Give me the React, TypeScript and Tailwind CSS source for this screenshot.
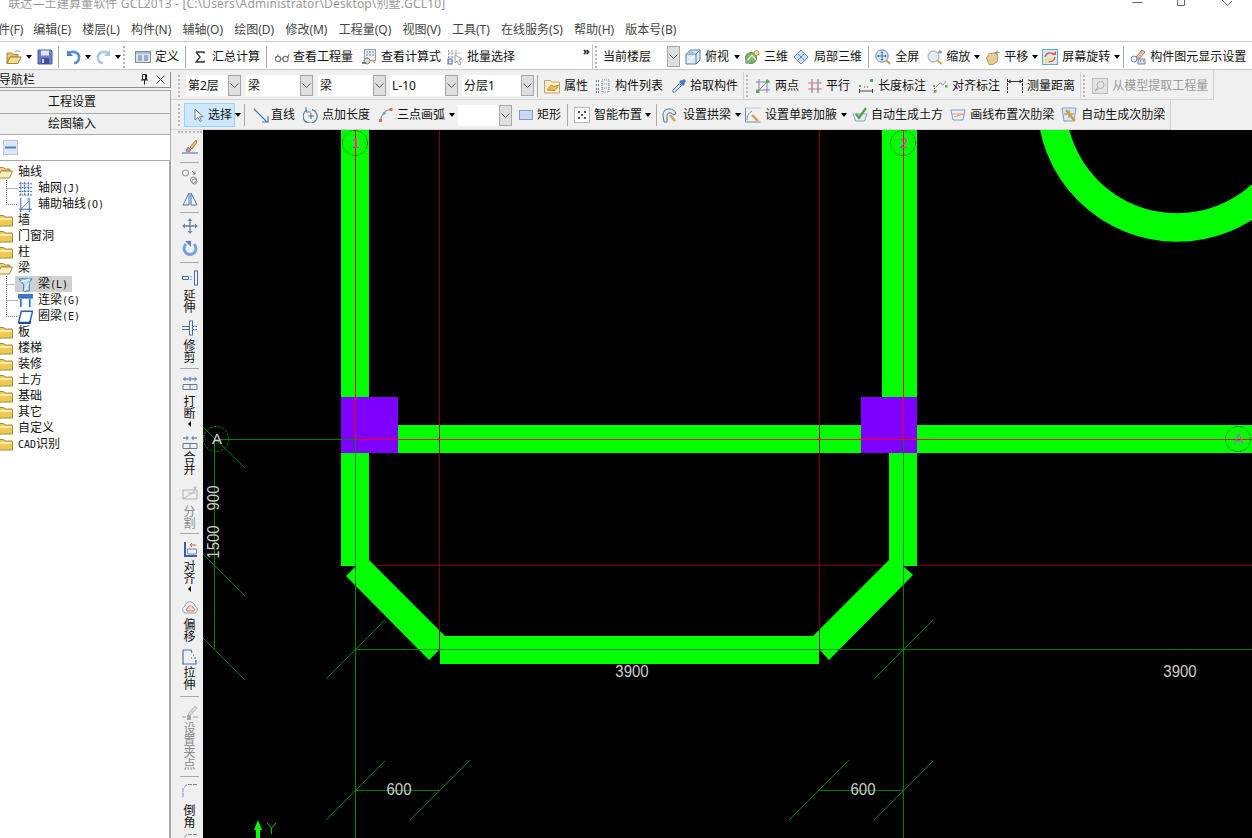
import type { ReactNode } from "react";
import clsx from "clsx";

const Ico = ({ children, className }: { children: ReactNode; className?: string }) => (
  <svg viewBox="0 0 16 16" className={clsx("h-4 w-4 shrink-0", className)} fill="none">
    {children}
  </svg>
);

/* main toolbar icons */
const FolderOpenIcon = () => (
  <Ico>
    <path d="M1 4h5l1 1.5h5V8H4L1 14z" fill="#e8c468" stroke="#a5853c" />
    <path d="M4 8h11l-3 6.5H1z" fill="#f7dd8c" stroke="#a5853c" />
    <path d="M9 3c2-2 4-1 5 0" stroke="#6f8fb8" />
  </Ico>
);
const SaveIcon = () => (
  <Ico>
    <path d="M1 1h13l1 1v13H1z" fill="#6d7fc4" stroke="#4d5f9c" />
    <rect x="4" y="1.5" width="8" height="5" fill="#dfe6f5" />
    <rect x="4" y="9" width="8" height="6" fill="#3f4f96" />
    <rect x="5" y="10" width="2" height="4" fill="#c7d0ea" />
  </Ico>
);
const UndoIcon = ({ light }: { light?: boolean }) => (
  <Ico className={light ? "-scale-x-100" : undefined}>
    <path d="M3 3.5c6-2 11 1 10 6-.6 3-3 4.5-5 4.5" stroke={light ? "#a9c8e8" : "#5a8fd0"} strokeWidth="2.6" />
    <path d="M1 1v6h6z" fill={light ? "#a9c8e8" : "#4a80c4"} />
  </Ico>
);
const DefineIcon = () => (
  <Ico>
    <rect x="0.5" y="2.5" width="15" height="11" fill="#dce6f2" stroke="#7a8ca8" />
    <rect x="1" y="3" width="14" height="2" fill="#a9bcd6" />
    <path d="M3 7h4M3 9h4M3 11h4M9 7h4M9 9h4M9 11h4" stroke="#5d7391" />
  </Ico>
);
const SigmaIcon = () => (
  <Ico>
    <path d="M4 3h8v1.5M4 3l4 5-4 5h8v-1.5" stroke="#333" strokeWidth="1.4" />
  </Ico>
);
const GlassesIcon = () => (
  <Ico>
    <circle cx="4" cy="10" r="2.6" stroke="#777" strokeWidth="1.2" />
    <circle cx="11.5" cy="10" r="2.6" stroke="#777" strokeWidth="1.2" />
    <path d="M6.5 10h2.5M1.5 9l3-4M14 9l1-4" stroke="#777" />
  </Ico>
);
const CalcDocIcon = () => (
  <Ico>
    <rect x="3.5" y="0.5" width="11" height="11" fill="#eef2f8" stroke="#8b9bb5" />
    <path d="M5 3h2M8 3h2M11 3h2M5 6h2M8 6h2M11 6h2M5 9h2" stroke="#5a7ca8" />
    <circle cx="6" cy="12" r="3" fill="#e8d9a8" stroke="#7a8aa0" />
    <path d="M1 14h4" stroke="#3c6cc0" strokeWidth="1.6" />
    <path d="M11 11l3 3" stroke="#d8a040" strokeWidth="1.6" />
  </Ico>
);
const BatchIcon = () => (
  <Ico>
    <path d="M1.5 1v14M1.5 4h13M1.5 8h8M1.5 12h6M5 1v8M9 1v7" stroke="#9a9fa8" strokeDasharray="2 1" />
    <rect x="1" y="10" width="4" height="5" stroke="#4a6cc0" />
    <path d="M8 6l7 4-3 1 2 4-2 1-2-4-2 2z" fill="#fff" stroke="#9aa0a8" />
  </Ico>
);
const CubeIcon = () => (
  <Ico>
    <path d="M1 5l4-4h10v10l-4 4H1z" fill="#dbe8f5" stroke="#5c7fa0" />
    <path d="M1 5h10v10M11 5l4-4" stroke="#5c7fa0" />
    <path d="M5 1l6 4h-10z" fill="#9cc0e0" />
    <path d="M2 14l8-8" stroke="#fff" />
  </Ico>
);
const ThreeDIcon = () => (
  <Ico>
    <circle cx="7" cy="9" r="5.5" fill="#7fb85a" stroke="#5a8a40" />
    <path d="M3 12l5-6 4 5" stroke="#d8e8f0" strokeWidth="1.4" />
    <circle cx="12.5" cy="4" r="2.5" fill="#f0e0a0" stroke="#b0983c" />
    <circle cx="3" cy="13" r="2" fill="#8aa0c0" />
  </Ico>
);
const Local3DIcon = () => (
  <Ico>
    <path d="M1 8l7-7 7 7-7 7z" fill="#cfe0f2" stroke="#6a8cb0" />
    <path d="M4.5 4.5l7 7M8 1L4.5 4.5M11.5 4.5l-7 7M8 8l3.5-3.5" stroke="#6a8cb0" />
  </Ico>
);
const FullScreenIcon = () => (
  <Ico>
    <circle cx="7" cy="7" r="6.2" fill="#dbe6f5" stroke="#6888b0" />
    <path d="M7 3v8M3 7h8" stroke="#4a6ca8" />
    <path d="M7 2l1.5 2h-3zM7 12l1.5-2h-3zM2 7l2-1.5v3zM12 7l-2-1.5v3z" fill="#4a6ca8" />
    <path d="M11.5 11.5l3.5 3.5" stroke="#c89a40" strokeWidth="1.8" />
  </Ico>
);
const ZoomIcon = () => (
  <Ico>
    <circle cx="6.5" cy="7.5" r="5.5" fill="#e3ebf5" stroke="#8a9cb4" />
    <path d="M3 6c1-2 2-2.5 4-2.5" stroke="#fff" strokeWidth="1.5" />
    <path d="M10.5 11.5l4 3.5" stroke="#c8a040" strokeWidth="1.8" />
    <path d="M13 1v4M11 3h4" stroke="#6a7c94" />
  </Ico>
);
const PanIcon = () => (
  <Ico>
    <path d="M2 10c-1-2 0-3 1.5-2.500L3 5.500 5 4l1 1 2-1.500 1.500 1 2-.5L13 8l-1 5-4 2.500H4z" fill="#e4cd8f" stroke="#b8a060" />
    <path d="M12 1v5M9.5 3.5h5" stroke="#7a8ca0" />
  </Ico>
);
const RotateIcon = () => (
  <Ico>
    <rect x="0.5" y="0.5" width="15" height="15" fill="#d8ecf5" stroke="#60a8d0" />
    <rect x="3" y="9" width="7" height="5" fill="#e8e098" />
    <path d="M3 8a5 5 0 0 1 9-2" stroke="#e05a40" strokeWidth="1.4" />
    <path d="M13 8a5 5 0 0 1-6 4.500" stroke="#e05a40" strokeWidth="1.4" />
    <path d="M10 6h4V2z" fill="#e05a40" />
  </Ico>
);
const DisplayIcon = () => (
  <Ico>
    <circle cx="4" cy="10" r="3" fill="#e6edf5" stroke="#7a8a9e" />
    <path d="M6 8l6-7 3 2-6 7z" fill="#e4c8a0" stroke="#9c7c60" />
    <path d="M8 10h7v5H8z" fill="#cfdcec" stroke="#6a8cb0" />
    <path d="M10 12h1M13 12h1" stroke="#c05030" />
  </Ico>
);
const AttrIcon = () => (
  <Ico>
    <path d="M.5 2.5h6l1 1.500h8v11H.5z" fill="#fbeed0" stroke="#c4a070" />
    <path d="M3 12l4-5 3 1.500L15 7l-4 5.500z" fill="#e8c050" stroke="#c09030" />
  </Ico>
);
const ListIcon = () => (
  <Ico>
    <path d="M1 3h3M1 7h3M1 11h3M1 14h3" stroke="#6a7c94" strokeDasharray="1 1" strokeWidth="2" />
    <path d="M7 2h7v12H7zM7 6h7M7 10h7" stroke="#6a86a8" strokeDasharray="1 1" />
  </Ico>
);
const PickIcon = () => (
  <Ico>
    <path d="M2 14l-.5-1.500 7-7 2 2-7 7z" fill="#cfe2f5" stroke="#4a78b8" />
    <path d="M8 4l2-2 1 .5 2-1.500 2 2-1.500 2 .5 1-2 2z" fill="#4a78b8" />
  </Ico>
);
const TwoPointIcon = () => (
  <Ico>
    <path d="M4 1v14M12 1v14M1 4h14M1 12h14" stroke="#7a86b0" />
    <path d="M2 14L14 2" stroke="#d87070" />
    <rect x="1" y="12" width="3" height="3" fill="#50b050" />
    <rect x="11" y="2" width="3" height="3" fill="#50b050" />
  </Ico>
);
const ParallelIcon = () => (
  <Ico>
    <path d="M5 1v14M11 1v14" stroke="#7a86b0" strokeWidth="1.2" />
    <path d="M1 5h14M1 11h14" stroke="#d87070" strokeWidth="1.2" />
  </Ico>
);
const LenDimIcon = () => (
  <Ico>
    <rect x="12" y="1" width="3" height="3" fill="#50b050" />
    <rect x="1" y="7" width="2" height="2" fill="#50b050" />
    <path d="M1.5 11v4M14.5 11v4M2 13h12" stroke="#444" />
    <path d="M6 9h1M9 9h1" stroke="#444" />
  </Ico>
);
const AlignDimIcon = () => (
  <Ico>
    <path d="M2 11l6-6 3 2 3-4" stroke="#555" strokeDasharray="1.5 1" />
    <rect x="13" y="7" width="2.5" height="2.5" fill="#50b050" />
    <rect x="2" y="12" width="2.5" height="2.5" fill="#50b050" />
    <rect x="1" y="7" width="2" height="2" fill="#50b050" />
  </Ico>
);
const MeasureIcon = () => (
  <Ico>
    <path d="M.5 1v14M15.5 1v14" stroke="#333" strokeDasharray="3 1" />
    <path d="M1 3.5h14" stroke="#333" />
    <path d="M1 3.5l2.500-2v4zM15 3.5l-2.500-2v4z" fill="#333" />
  </Ico>
);
const SearchOffIcon = () => (
  <Ico>
    <rect x="0.5" y="0.5" width="15" height="15" fill="#e4e4e4" stroke="#bcbcbc" />
    <circle cx="8.5" cy="7" r="3.5" stroke="#b0b0b0" />
    <path d="M6 10l-3 3" stroke="#a8a8a8" strokeWidth="1.5" />
  </Ico>
);
const CursorIcon = () => (
  <Ico>
    <path d="M4 2v11l3-2.500 2 4 1.500-.7-2-4h3.800z" fill="#fff" stroke="#6e7c90" />
  </Ico>
);
const LineIcon = () => (
  <Ico>
    <path d="M1 2l13 13" stroke="#4a78b0" strokeWidth="1.2" />
    <path d="M15 9v6H9" stroke="#4a78b0" strokeWidth="1.2" />
  </Ico>
);
const PointLenIcon = () => (
  <Ico>
    <path d="M4 3a7 7 0 1 0 5-.5" stroke="#5a80a8" strokeWidth="1.3" />
    <path d="M3 0v5h5" stroke="#5a80a8" />
    <path d="M8 6v6M5 9h6" stroke="#4a70a0" />
  </Ico>
);
const ArcIcon = () => (
  <Ico>
    <path d="M2.5 14C3 8 7 3 13 2" stroke="#7a8aa0" strokeWidth="1.1" />
    <rect x="1" y="12" width="3" height="3" fill="#e87050" />
    <rect x="11.5" y="1" width="3" height="3" fill="#e87050" />
    <rect x="5" y="5" width="2.5" height="2.5" fill="#50a8d0" />
  </Ico>
);
const RectIcon = () => (
  <Ico>
    <rect x="1.5" y="3.5" width="13" height="9" fill="#c9d8f5" stroke="#7a9ad8" />
  </Ico>
);
const SmartIcon = () => (
  <Ico>
    <rect x="0.5" y="0.5" width="15" height="15" fill="#fff" stroke="#777" strokeDasharray="1 1" />
    <path d="M4 4h2v2H4zM10 4h2v2h-2zM4 10h2v2H4zM10 10h2v2h-2zM7 7h2v2H7z" fill="#455a78" />
  </Ico>
);
const ArchIcon = () => (
  <Ico>
    <path d="M1 8c0-8 12-8 13-1l-3 1c-1-3-5-3-6 0v7H2z" fill="#e6f0f8" stroke="#4a78a8" />
    <path d="M8 8l5 6" stroke="#d8a040" strokeWidth="2.4" />
  </Ico>
);
const HaunchIcon = () => (
  <Ico>
    <path d="M.5 1v14h15" stroke="#6a8cb0" />
    <path d="M1 1h15" stroke="#b8c8dc" />
    <path d="M2 13c0-5 2-7 5-9" stroke="#6a8cb0" />
    <path d="M7 8l6 6" stroke="#d8a040" strokeWidth="2.4" />
  </Ico>
);
const EarthIcon = () => (
  <Ico>
    <path d="M1 7l2.500 7h9L15 7z" fill="#e8eef5" stroke="#8aa0b8" />
    <path d="M4 7l3 4 7-10" stroke="#48a848" strokeWidth="2.2" />
  </Ico>
);
const RibLineIcon = () => (
  <Ico>
    <path d="M1 3h14M3 13h10M1 3l2 10M15 3l-2 10" stroke="#7a9ccc" />
    <path d="M2 7h12M4 10l9-3" stroke="#d89a80" />
  </Ico>
);
const RibAutoIcon = () => (
  <Ico>
    <path d="M1 1h14l-2 13H3z" fill="#d8e8f5" stroke="#7a9ccc" />
    <path d="M5 3l9 11" stroke="#c89840" strokeWidth="2.2" />
    <path d="M3 7h10M8 3v8" stroke="#c8a048" strokeWidth="1.4" />
  </Ico>
);

/* tree icons */
const FolderClosed = () => (
  <Ico>
    <path d="M.5 3.5h6l1.500 1.500h7.500v9H.5z" fill="#f0c850" stroke="#a88a3c" />
    <path d="M1 6h14v2H1z" fill="#fbeeb0" />
  </Ico>
);
const FolderOpened = () => (
  <Ico>
    <path d="M.5 3.5h6l1.500 1.500h5v2H4l-3.500 6z" fill="#eccf80" stroke="#a88a3c" />
    <path d="M4 7h11.500l-3 7H.5z" fill="#fbeec0" stroke="#a88a3c" />
  </Ico>
);
const AxisGridIcon = () => (
  <Ico>
    <path d="M1 3h14M1 7h14M1 11h14M1 15h14M3 1v15M7 1v15M11 1v15" stroke="#2a5cc0" strokeDasharray="2 1" />
  </Ico>
);
const AuxAxisIcon = () => (
  <Ico>
    <path d="M3 1v15M12 1v15M1 13h14" stroke="#2a5cc0" />
    <path d="M3 13L13 3" stroke="#7a8ea8" />
    <rect x="10" y="1" width="3" height="3" fill="#9ab0d0" />
  </Ico>
);
const BeamIcon = () => (
  <Ico>
    <path d="M1 2h14l-3 4v9H6V8z" fill="#bfe0f5" stroke="#2a70c0" />
    <path d="M3 5l10-3M7 15l5-9" stroke="#fff" />
  </Ico>
);
const ConnBeamIcon = () => (
  <Ico>
    <rect x="0.5" y="1.5" width="15" height="4" fill="#3a78c8" stroke="#2a5ca8" strokeDasharray="2 .5" />
    <path d="M3 6v9M12.500 6v9" stroke="#3a78c8" strokeWidth="2" />
  </Ico>
);
const RingBeamIcon = () => (
  <Ico>
    <path d="M3.5 2.5h12l-3 12H.5z" fill="#fff" stroke="#2a5cb0" strokeWidth="1.6" />
    <path d="M.5 15h12l1-2" stroke="#1c48a0" strokeWidth="2" />
  </Ico>
);

/* vertical toolbar icons */
const BrushIcon = () => (
  <Ico>
    <path d="M14 1L8 8l2 2 5-7z" fill="#e8c070" stroke="#a08050" />
    <path d="M6 8l3 3c-1 2-3 2-5 1z" fill="#e08cb0" stroke="#808090" />
    <path d="M0 14h16" stroke="#5a7ca8" strokeWidth="1.2" />
  </Ico>
);
const CopyCircleIcon = () => (
  <Ico>
    <circle cx="3.5" cy="4" r="3" stroke="#8a8f98" />
    <circle cx="11.5" cy="11" r="3" stroke="#8a8f98" />
    <circle cx="12.5" cy="12.5" r="2.5" stroke="#8a8f98" />
    <path d="M10 2l3 3M13 2.5V5h-2.500" stroke="#6a86a8" />
  </Ico>
);
const MirrorIcon = () => (
  <Ico>
    <path d="M7 2L1 14h6zM9 2l6 12H9z" fill="#f2f5f9" stroke="#4a70a8" />
  </Ico>
);
const MoveIcon = () => (
  <Ico>
    <path d="M8 1v14M1 8h14" stroke="#6a8098" strokeWidth="1.3" />
    <path d="M8 0l2.500 3h-5zM8 16l2.500-3h-5zM0 8l3-2.500v5zM16 8l-3-2.500v5z" fill="#6a8ab0" />
  </Ico>
);
const SpinIcon = () => (
  <Ico>
    <path d="M4 4a6 6 0 1 0 8 0" stroke="#7aa0d8" strokeWidth="3" />
    <path d="M3 1h6v6z" fill="#5a88d0" />
  </Ico>
);
const ExtendIcon = () => (
  <Ico>
    <path d="M.5 6.5h6v3h-6z" stroke="#4a70a8" />
    <path d="M8.5 6.500h2M8.5 9.500h2" stroke="#4a70a8" strokeDasharray="1 1" />
    <rect x="12.5" y="1" width="3" height="14" stroke="#4a70a8" />
  </Ico>
);
const TrimIcon = () => (
  <Ico>
    <path d="M0 6.500h7M0 9.500h7" stroke="#4a70a8" />
    <rect x="7.5" y="1" width="3" height="14" stroke="#4a70a8" fill="#f5f8fc" />
    <path d="M11 6.500h5M11 9.500h5" stroke="#4a70a8" strokeDasharray="1.5 1" />
  </Ico>
);
const BreakIcon = () => (
  <Ico>
    <path d="M1 4h5M15 4h-5" stroke="#6a8cc8" strokeWidth="1.3" />
    <path d="M1 4l2.500-2.500v5zM10 4L8 1.500v5zM15 4l-2.500-2.500v5zM6 4l2-2.500v5z" fill="#6a8cc8" />
    <path d="M1 9.500h14v5H1zM8 9.500v5" stroke="#707880" />
  </Ico>
);
const MergeIcon = () => (
  <Ico>
    <path d="M1 4h5M15 4h-5" stroke="#6a8cc8" strokeWidth="1.3" />
    <path d="M7 4L4.500 1.500v5zM9 4l2.500-2.500v5z" fill="#6a8cc8" />
    <path d="M1 9.500h14v5H1zM8 9.500v5" stroke="#707880" />
  </Ico>
);
const SplitIcon = () => (
  <Ico>
    <path d="M1 5h14v9H1z" fill="#f0f0f0" stroke="#b0b0b0" />
    <path d="M1 14L13 6M6 8h8" stroke="#b8b8b8" />
    <path d="M12 1l3 1-3 4z" fill="#c0c0c0" />
  </Ico>
);
const AlignIcon = () => (
  <Ico>
    <path d="M3 1v14h12" stroke="#3c5cb0" strokeWidth="2" />
    <path d="M5.5 8h9v5h-9z" stroke="#6a8cc8" />
    <path d="M14 4H8M10 2L8 4l2 2" stroke="#d86040" />
  </Ico>
);
const OffsetIcon = () => (
  <Ico>
    <path d="M3 14c-3-1-3-6 0-7 0-5 9-6 10 0 3 1 3 6 0 7z" fill="#f5f6f8" stroke="#8a9cb4" />
    <path d="M5 12c-1-1-1-3 1-3 0-3 5-3 5 0 2 0 2 2 1 3z" fill="#f8e0d8" stroke="#d87060" />
  </Ico>
);
const StretchIcon = () => (
  <Ico>
    <path d="M1 1h8l1 3M1 1v14h13v-4" stroke="#4a70a8" strokeWidth="1.2" />
    <path d="M11 6h1M12 9h2M9 9h1M13 12h1" stroke="#555" />
  </Ico>
);
const GripIcon = () => (
  <Ico>
    <path d="M6 9l7-8 2 2-7 8z" fill="#d8d8d8" stroke="#bbb" />
    <path d="M0 12h4M11 12h5" stroke="#bbb" strokeWidth="1.5" />
    <rect x="5" y="10" width="4" height="5" fill="#a8a8a8" />
  </Ico>
);
const ChamferIcon = () => (
  <Ico>
    <path d="M15 1.500H5L1 5.500V15" stroke="#6a8cb0" strokeDasharray="4 1" />
  </Ico>
);

const Caret = ({ className }: { className?: string }) => (
  <span className={clsx("h-0 w-0 shrink-0 border-x-[3px] border-t-[4px] border-x-transparent border-t-black", className)} />
);

const Sep = ({ className }: { className?: string }) => (
  <span className={clsx("h-[22px] w-px shrink-0 bg-[#a8a8a8]", className)} />
);

const Grip = ({ className }: { className?: string }) => (
  <span className={clsx("h-[22px] w-[2px] shrink-0 border-l-2 border-dotted border-[#b4b4b4]", className)} />
);

const Tool = ({
  icon,
  label,
  className,
  gap = "gap-[4px]",
  dim,
}: {
  icon: ReactNode;
  label: string;
  className?: string;
  gap?: string;
  dim?: boolean;
}) => (
  <div className={clsx("flex shrink-0 items-center", gap, dim ? "text-[#9a9a9a]" : "text-[#111]", className)}>
    {icon}
    <span>{label}</span>
  </div>
);

const Combo = ({ text, className }: { text: string; className?: string }) => (
  <div className={clsx("flex h-[21px] shrink-0 items-center justify-between bg-white", className)}>
    <span className="pl-[2px] text-[#111]">{text}</span>
    <span className="flex h-[21px] w-[13px] items-center justify-center border border-[#a6a6a6] bg-[#dedede]">
      <svg viewBox="0 0 9 5" className="h-[5px] w-[9px]" fill="none">
        <path d="M.5.5l4 4 4-4" stroke="#555" />
      </svg>
    </span>
  </div>
);

const ToolbarTop = () => (
  <div className="flex h-[29px] items-center border-y border-[#c8c8c8] bg-white pt-[2px] text-[12px] leading-[16px]">
    <div className="ml-[6px]"><FolderOpenIcon /></div>
    <Caret className="ml-[4px]" />
    <div className="ml-[5px]"><SaveIcon /></div>
    <Sep className="ml-[5px]" />
    <div className="ml-[7px]"><UndoIcon /></div>
    <Caret className="ml-[3px]" />
    <div className="ml-[4px]"><UndoIcon light /></div>
    <Caret className="ml-[4px]" />
    <Grip className="ml-[2px]" />
    <Tool className="ml-[10px]" icon={<DefineIcon />} label="定义" />
    <Sep className="ml-[6px]" />
    <Tool className="ml-[6px]" icon={<SigmaIcon />} label="汇总计算" />
    <Sep className="ml-[6px]" />
    <Tool className="ml-[7px]" gap="gap-[3px]" icon={<GlassesIcon />} label="查看工程量" />
    <Tool className="ml-[8px]" icon={<CalcDocIcon />} label="查看计算式" />
    <Tool className="ml-[6px]" icon={<BatchIcon />} label="批量选择" />
    <span className="ml-[68px] w-[8px] self-start text-[11px] font-bold leading-[14px] text-black">»</span>
    <span className="ml-px h-full w-px shrink-0 bg-[#c8c8c8]" />
    <Grip className="ml-[2px]" />
    <Combo className="ml-[4px] w-[79px]" text="当前楼层" />
    <Tool className="ml-[5px]" icon={<CubeIcon />} label="俯视" />
    <Caret className="ml-[5px]" />
    <Tool className="ml-[4px]" icon={<ThreeDIcon />} label="三维" />
    <Tool className="ml-[5px]" gap="gap-[5px]" icon={<Local3DIcon />} label="局部三维" />
    <Sep className="ml-[6px]" />
    <Tool className="ml-[6px]" icon={<FullScreenIcon />} label="全屏" />
    <Tool className="ml-[8px]" gap="gap-[3px]" icon={<ZoomIcon />} label="缩放" />
    <Caret className="ml-[4px]" />
    <Tool className="ml-[5px]" gap="gap-[3px]" icon={<PanIcon />} label="平移" />
    <Caret className="ml-[4px]" />
    <Tool className="ml-[4px]" icon={<RotateIcon />} label="屏幕旋转" />
    <Caret className="ml-[4px]" />
    <Sep className="ml-[3px]" />
    <Tool className="ml-[6px]" icon={<DisplayIcon />} label="构件图元显示设置" />
  </div>
);

const ToolbarSecond = () => (
  <div className="flex h-[30px] items-center text-[12px] leading-[16px]">
    <div className="flex h-full items-center border-r border-b border-[#d2d2d2] bg-[#f0f0f0] pr-[5px] pt-[2px]">
      <Grip className="ml-[7px]" />
      <Combo className="ml-[6px] w-[55px]" text="第2层" />
      <Combo className="ml-[5px] w-[67px]" text="梁" />
      <Combo className="ml-[5px] w-[68px]" text="梁" />
      <Combo className="ml-[4px] w-[68px]" text="L-10" />
      <Combo className="ml-[4px] w-[72px]" text="分层1" />
      <Sep className="ml-[3px]" />
      <Tool className="ml-[6px]" icon={<AttrIcon />} label="属性" />
      <Tool className="ml-[7px]" icon={<ListIcon />} label="构件列表" />
      <Tool className="ml-[8px]" gap="gap-[3px]" icon={<PickIcon />} label="拾取构件" />
      <span className="ml-[5px] h-full w-px bg-[#d2d2d2]" />
      <Grip className="ml-[2px]" />
      <Tool className="ml-[7px]" icon={<TwoPointIcon />} label="两点" />
      <Tool className="ml-[8px]" gap="gap-[3px]" icon={<ParallelIcon />} label="平行" />
      <Tool className="ml-[8px]" icon={<LenDimIcon />} label="长度标注" />
      <Tool className="ml-[6px]" icon={<AlignDimIcon />} label="对齐标注" />
      <Tool className="ml-[7px]" icon={<MeasureIcon />} label="测量距离" />
      <span className="ml-[5px] h-full w-px bg-[#d2d2d2]" />
      <Grip className="ml-[2px]" />
      <Tool className="ml-[7px]" icon={<SearchOffIcon />} label="从模型提取工程量" dim />
    </div>
  </div>
);

const ToolbarThird = () => (
  <div className="flex h-[30px] items-center text-[12px] leading-[16px]">
    <div className="flex h-full items-center border-r border-b border-[#d2d2d2] bg-[#f0f0f0] pr-[5px] pt-[1px]">
      <Grip className="ml-[7px]" />
      <div className="ml-[4px] flex h-[24px] w-[51px] items-center gap-[1px] border border-[#99d1ff] bg-[#cce8ff] pl-[6px] text-[#111]">
        <CursorIcon />
        <span>选择</span>
      </div>
      <Caret />
      <Sep className="ml-[3px]" />
      <Tool className="ml-[8px]" gap="gap-[2px]" icon={<LineIcon />} label="直线" />
      <Tool className="ml-[8px]" gap="gap-[3px]" icon={<PointLenIcon />} label="点加长度" />
      <Tool className="ml-[8px]" gap="gap-[3px]" icon={<ArcIcon />} label="三点画弧" />
      <Caret className="ml-[4px]" />
      <Combo className="ml-[3px] w-[54px]" text="" />
      <Tool className="ml-[6px]" gap="gap-[3px]" icon={<RectIcon />} label="矩形" />
      <Sep className="ml-[6px]" />
      <Tool className="ml-[6px]" icon={<SmartIcon />} label="智能布置" />
      <Caret className="ml-[3px]" />
      <Sep className="ml-[5px]" />
      <Tool className="ml-[5px]" gap="gap-[5px]" icon={<ArchIcon />} label="设置拱梁" />
      <Caret className="ml-[4px]" />
      <Tool className="ml-[4px]" icon={<HaunchIcon />} label="设置单跨加腋" />
      <Caret className="ml-[4px]" />
      <Tool className="ml-[5px]" gap="gap-[3px]" icon={<EarthIcon />} label="自动生成土方" />
      <Tool className="ml-[7px]" icon={<RibLineIcon />} label="画线布置次肋梁" />
      <Tool className="ml-[7px]" icon={<RibAutoIcon />} label="自动生成次肋梁" />
    </div>
  </div>
);

const Mono = ({ children }: { children: ReactNode }) => (
  <span className="font-['DejaVu_Sans_Mono',monospace] text-[10px]">{children}</span>
);

const TreeFolder = ({ open, children }: { open?: boolean; children: ReactNode }) => (
  <div className="flex h-[16px] items-center">
    <div className="ml-[-3px] w-[21px]">{open ? <FolderOpened /> : <FolderClosed />}</div>
    <span>{children}</span>
  </div>
);

const TreeLeaf = ({
  icon,
  children,
  last,
  active,
}: {
  icon: ReactNode;
  children: ReactNode;
  last?: boolean;
  active?: boolean;
}) => (
  <div className="flex h-[16px] items-center">
    <svg viewBox="0 0 12 16" className="ml-[6px] h-4 w-3 shrink-0" fill="none">
      <path d={last ? "M.5 0V8.500H12" : "M.5 0V16M.5 8.500H12"} stroke="#777" strokeDasharray="1 1" />
    </svg>
    <div className={clsx("ml-[-3px] flex h-[16px] w-[57px] items-center pl-[3px]", active && "bg-[#d0d0d0]")}>
      <div className="w-[20px] shrink-0 [&>svg]:h-[15px] [&>svg]:w-[15px]">{icon}</div>
      <span className="whitespace-nowrap">{children}</span>
    </div>
  </div>
);

const NavPanel = () => (
  <div className="flex h-[768px] w-[171px] shrink-0 flex-col overflow-hidden bg-[#f0f0f0] text-[12px] leading-[16px] text-[#111]">
    <div className="mt-[2px] flex h-[16px] items-center border-r border-b border-[#8c8c8c] pr-[3px]">
      <span className="ml-[-1px] text-[12px]">导航栏</span>
      <svg viewBox="0 0 9 11" className="ml-auto h-[11px] w-[9px]" fill="none">
        <path d="M2.5.5h4v5h-4zM1 6h7M4.5 6v4.500" stroke="#222" />
        <path d="M5.500 1v4.500" stroke="#222" />
      </svg>
      <svg viewBox="0 0 9 9" className="ml-[7px] mr-[2px] h-[9px] w-[9px]" fill="none">
        <path d="M.5.5l8 8M8.500.5l-8 8" stroke="#333" />
      </svg>
    </div>
    <div className="mt-[2px] flex h-[23px] items-center justify-center border-t border-r border-[#aaa] pr-[26px]">工程设置</div>
    <div className="flex h-[21px] items-center justify-center border-t border-r border-[#aaa] pr-[26px]">绘图输入</div>
    <div className="flex h-[27px] items-center border-t border-r border-b border-[#aaa] bg-white pl-[3px]">
      <svg viewBox="0 0 15 15" className="h-[15px] w-[15px]" fill="none">
        <rect x="0.5" y="0.5" width="14" height="14" fill="#dfe6f8" stroke="#b8c4e4" />
        <path d="M2 7.500h11" stroke="#3a88c0" strokeWidth="2" />
      </svg>
    </div>
    <div className="flex-1 border-r-2 border-[#a8a8a8] bg-white pt-[3px]">
      <TreeFolder open>轴线</TreeFolder>
      <TreeLeaf icon={<AxisGridIcon />}>轴网<Mono>(J)</Mono></TreeLeaf>
      <TreeLeaf icon={<AuxAxisIcon />} last>辅助轴线<Mono>(O)</Mono></TreeLeaf>
      <TreeFolder>墙</TreeFolder>
      <TreeFolder>门窗洞</TreeFolder>
      <TreeFolder>柱</TreeFolder>
      <TreeFolder open>梁</TreeFolder>
      <TreeLeaf icon={<BeamIcon />} active>梁<Mono>(L)</Mono></TreeLeaf>
      <TreeLeaf icon={<ConnBeamIcon />}>连梁<Mono>(G)</Mono></TreeLeaf>
      <TreeLeaf icon={<RingBeamIcon />} last>圈梁<Mono>(E)</Mono></TreeLeaf>
      <TreeFolder>板</TreeFolder>
      <TreeFolder>楼梯</TreeFolder>
      <TreeFolder>装修</TreeFolder>
      <TreeFolder>土方</TreeFolder>
      <TreeFolder>基础</TreeFolder>
      <TreeFolder>其它</TreeFolder>
      <TreeFolder>自定义</TreeFolder>
      <TreeFolder><Mono>CAD</Mono>识别</TreeFolder>
    </div>
  </div>
);

const VSep = ({ className }: { className?: string }) => (
  <span className={clsx("h-px w-[19px] shrink-0 bg-[#a8a8a8]", className)} />
);

const VTool = ({
  icon,
  text,
  className,
  textTop,
  arrow,
  dim,
}: {
  icon: ReactNode;
  text?: string;
  className?: string;
  textTop?: string;
  arrow?: boolean;
  dim?: boolean;
}) => (
  <div className={clsx("flex shrink-0 flex-col items-center", className)}>
    {icon}
    {text && (
      <span className={clsx("ml-[-2px] text-[12px] leading-[13px] [writing-mode:vertical-rl]", dim ? "text-[#8a8a8a]" : "text-[#111]", textTop)}>
        {text}
      </span>
    )}
    {arrow && <span className="mt-[2px] h-0 w-0 border-y-[3px] border-r-[3px] border-y-transparent border-r-black" />}
  </div>
);

const VerticalBar = () => (
  <div className="flex h-[708px] w-[27px] shrink-0 flex-col items-center overflow-hidden bg-[#f0f0f0]">
    <span className="mt-[1px] h-[2px] w-[24px] shrink-0 border-t-2 border-dotted border-[#b4b4b4]" />
    <VTool className="mt-[6px]" icon={<BrushIcon />} />
    <VSep className="mt-[7px]" />
    <VTool className="mt-[6px]" icon={<CopyCircleIcon />} />
    <VTool className="mt-[6px]" icon={<MirrorIcon />} />
    <VSep className="mt-[5px]" />
    <VTool className="mt-[5px]" icon={<MoveIcon />} />
    <VTool className="mt-[6px]" icon={<SpinIcon />} />
    <VSep className="mt-[6px]" />
    <VTool className="mt-[7px]" icon={<ExtendIcon />} text="延伸" textTop="mt-[3px]" />
    <VTool className="mt-[7px]" icon={<TrimIcon />} text="修剪" textTop="mt-[3px]" />
    <VSep className="mt-[5px]" />
    <VTool className="mt-[6px]" icon={<BreakIcon />} text="打断" textTop="mt-[4px]" arrow />
    <VTool className="mt-[7px]" icon={<MergeIcon />} text="合并" textTop="mt-[1px]" />
    <VTool className="mt-[10px]" icon={<SplitIcon />} text="分割" textTop="mt-[4px]" dim />
    <VSep className="mt-[4px]" />
    <VTool className="mt-[7px]" icon={<AlignIcon />} text="对齐" textTop="mt-[3px]" arrow />
    <VTool className="mt-[7px]" icon={<OffsetIcon />} text="偏移" textTop="mt-[3px]" />
    <VTool className="mt-[7px]" icon={<StretchIcon />} text="拉伸" textTop="mt-[1px]" />
    <VSep className="mt-[6px]" />
    <VTool className="mt-[8px]" icon={<GripIcon />} text="设置夹点" textTop="mt-[1px]" dim />
    <VSep className="mt-[6px]" />
    <VTool className="mt-[6px]" icon={<ChamferIcon />} text="倒角" textTop="mt-[5px]" />
    <VTool className="mt-[5px]" icon={<ChamferIcon />} />
  </div>
);

const Bubble = ({ x, y, label, color }: { x: number; y: number; label: string; color: string }) => (
  <g>
    <circle cx={x} cy={y} r="12.5" stroke="#008000" fill="none" strokeDasharray="3 1" />
    <text x={x + 1} y={y + 5} textAnchor="middle" fontSize="15" fill={color} className="font-['Liberation_Sans',sans-serif]">
      {label}
    </text>
  </g>
);

const DimText = ({ x, y, children }: { x: number; y: number; children: string }) => (
  <text
    transform={`translate(${x} ${y}) scale(1 1.15)`}
    textAnchor="middle"
    fontSize="15"
    fill="#cfcfcf"
    className="font-['Liberation_Sans',sans-serif]"
  >
    {children}
  </text>
);

const Canvas = () => (
  <svg viewBox="203 130 1049 708" className="block h-[708px] w-[1049px] shrink-0 bg-black" fill="none">
    {/* grid under the beams */}
    <path d="M355.5 565.5H1252" stroke="#800000" shapeRendering="crispEdges" />
    <g shapeRendering="crispEdges" fill="#00ff00">
      <rect x="341" y="130" width="28" height="267" />
      <rect x="341" y="453" width="28" height="113" />
      <rect x="882" y="130" width="35" height="267" />
      <rect x="889" y="453" width="28" height="113" />
      <rect x="398" y="425" width="463" height="28" />
      <rect x="917" y="425" width="335" height="28" />
      <rect x="440" y="636" width="379" height="28" />
    </g>
    <polygon points="346,576 356,566 369,566 369,560 445,636 440,636 440,649 429,660" fill="#00ff00" />
    <polygon points="813,636 889,560 889,566 903,566 913,575 829,660 819,649 819,636" fill="#00ff00" />
    <circle cx="1177" cy="102" r="125.5" stroke="#00ff00" strokeWidth="28.5" />
    <rect x="341" y="397" width="57" height="56" fill="#8000ff" shapeRendering="crispEdges" />
    <rect x="861" y="397" width="56" height="56" fill="#8000ff" shapeRendering="crispEdges" />

    <g shapeRendering="crispEdges">
      <path d="M439.5 130V649M819.5 130V649" stroke="#800000" />
      <path d="M355.5 130V439M903.5 130V439M355 439.5H1252" stroke="#ff0000" />
      <path d="M214 439.5H355M355.5 439V838M903.5 439V838M214.5 439V649M355 649.5H1252M355 790.5H439M818 790.5H903" stroke="#008000" />
    </g>
    <path
      d="M203 427L245 468M203 554L245 596M203 638L245 680M326 679L385 620M874 679L933 620M326 820L385 761M410 820L470 760M789 820L849 760M874 820L933 761"
      stroke="#008000"
    />

    <Bubble x={355} y={143} label="1" color="#e030d0" />
    <Bubble x={903} y={143} label="2" color="#e030d0" />
    <Bubble x={216} y={439} label="A" color="#d8c8d8" />
    <Bubble x={1238} y={439} label="A" color="#a070a8" />

    <g transform="translate(219 557) rotate(-90)">
      <DimText x={15} y={0}>1500</DimText>
    </g>
    <g transform="translate(219 510) rotate(-90)">
      <DimText x={12} y={0}>900</DimText>
    </g>
    <DimText x={632} y={677}>3900</DimText>
    <DimText x={1180} y={677}>3900</DimText>
    <DimText x={399} y={795}>600</DimText>
    <DimText x={863} y={795}>600</DimText>

    {/* Y axis marker */}
    <path d="M258 820l4 10h-2v8h-4v-8h-2z" fill="#00ff00" />
    <path d="M267 823l4.500 5 4.500-5M271.500 828v6" stroke="#00c000" />
  </svg>
);

export default function App() {
  return (
    <div className="flex h-[838px] w-[1252px] flex-col overflow-hidden bg-[#f0f0f0] font-['Noto_Sans','Noto_Sans_CJK_SC',sans-serif]">
      <div className="flex h-[21px] shrink-0 overflow-hidden bg-white text-[12px] leading-[12px] tracking-[0.15px] text-[#999]">
        <span className="ml-[-4px] mt-[-2px] whitespace-nowrap">
          广联达—土建算量软件 GCL2013 - [C:\Users\Administrator\Desktop\别墅.GCL10]
        </span>
        <svg viewBox="0 0 100 8" className="ml-auto mr-[20px] h-[8px] w-[100px]" fill="none">
          <path d="M.5 2.5h10M45.5 0v5.500h7V0M48 0v.5M90 0l5.500 5.500M101 0l-5.500 5.500" stroke="#666" />
        </svg>
      </div>
      <div className="flex h-[20px] shrink-0 items-start gap-[11.2px] overflow-hidden bg-white pt-[1px] text-[12px] leading-[16px] text-[#444]">
        <span className="ml-[-14px] w-[36px] shrink-0 whitespace-nowrap">文件(F)</span>
        <span>编辑(E)</span>
        <span>楼层(L)</span>
        <span>构件(N)</span>
        <span>辅轴(O)</span>
        <span>绘图(D)</span>
        <span>修改(M)</span>
        <span>工程量(Q)</span>
        <span>视图(V)</span>
        <span>工具(T)</span>
        <span>在线服务(S)</span>
        <span>帮助(H)</span>
        <span>版本号(B)</span>
      </div>
      <ToolbarTop />
      <div className="flex flex-1">
        <NavPanel />
        <div className="flex min-w-0 flex-1 flex-col">
          <ToolbarSecond />
          <ToolbarThird />
          <div className="flex flex-1 pl-[5px]">
            <VerticalBar />
            <Canvas />
          </div>
        </div>
      </div>
    </div>
  );
}
